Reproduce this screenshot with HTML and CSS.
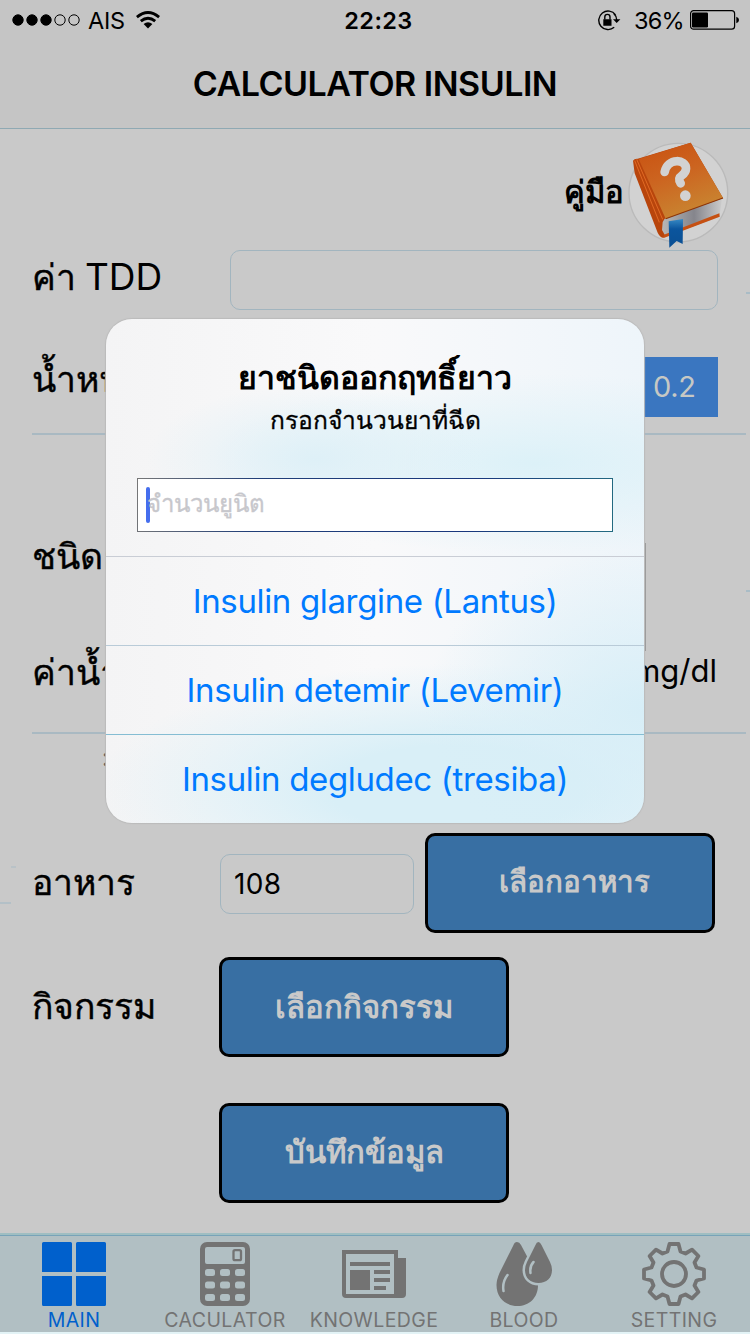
FILE: index.html
```html
<!DOCTYPE html>
<html lang="th">
<head>
<meta charset="utf-8">
<title>Calculator Insulin</title>
<link rel="stylesheet" href="styles.css">
</head>
<body>
<div class="screen">
  <header class="status">
    <div class="status-left">
      <svg class="dots" viewBox="0 0 68 12"><g stroke="#000"><circle cx="6" cy="6" r="5.2"/><circle cx="20" cy="6" r="5.2"/><circle cx="34" cy="6" r="5.2"/><g fill="none"><circle cx="48" cy="6" r="5.2"/><circle cx="62" cy="6" r="5.2"/></g></g></svg>
      <span class="carrier">AIS</span>
      <svg class="wifi" viewBox="0 0 24 18"><g fill="none" stroke="#000" stroke-width="2.8"><path d="M.9 6.1Q12-3.2 23.1 6.1"/><path d="M4.8 10.2Q12 4.2 19.2 10.2"/></g><path d="M7.6 13.1Q12 9.3 16.4 13.1L12 17.6Z"/></svg>
    </div>
    <div class="clock">22:23</div>
    <div class="status-right">
      <svg class="lock" viewBox="0 0 24 21"><path d="M18.6 4.8A9.3 9.3 0 1 0 17.2 17.3M16.6 3.2Q19.6 6 19.7 10" fill="none" stroke="#000" stroke-width="1.4"/><path d="M16 9.2h7.4L19.7 13zM6.3 9.2h8.2v6.5H6.3z"/><path d="M7.8 9.5V7a2.6 2.6 0 0 1 5.2 0v2.5" fill="none" stroke="#000" stroke-width="1.4"/></svg>
      <span class="percent">36%</span>
      <svg class="battery" viewBox="0 0 50 20"><rect x=".6" y=".6" width="44" height="18.6" rx="3" fill="none" stroke="#000" stroke-width="1.2"/><rect x="2" y="2.4" width="16" height="15" rx="1.2"/><path d="M46.3 6.7Q49 7.5 49 10t-2.7 3.3z"/></svg>
    </div>
  </header>
  <h1 class="title"><span>CALCULATOR INSULIN</span></h1>

  <main class="form">
    <div class="guide">
      <span class="guide-text">คู่มือ</span>
      <svg class="book" viewBox="264 36 302 320">
        <defs>
          <linearGradient id="cover" x1="0" y1="0" x2=".4" y2="1"><stop offset="0" stop-color="#c9500f"/><stop offset=".5" stop-color="#cc6420"/><stop offset="1" stop-color="#c98330"/></linearGradient>
          <linearGradient id="pages" x1="0" y1="0" x2="1" y2="0"><stop offset="0" stop-color="#bbb"/><stop offset=".55" stop-color="#85858c"/><stop offset="1" stop-color="#ccc"/></linearGradient>
          <linearGradient id="ribbon" x1="0" y1="0" x2="0" y2="1"><stop offset="0" stop-color="#3789c4"/><stop offset=".35" stop-color="#0b559d"/><stop offset="1" stop-color="#0b4f93"/></linearGradient>
        </defs>
        <circle cx="415" cy="188" r="148" fill="#d2d2d2" stroke="#bababa" stroke-width="4"/>
        <path d="M360 268L546 205L538 260L370 322Z" fill="url(#pages)"/>
        <path d="M362 318L538 250L539 260L371 324Z" fill="#c65012"/>
        <path d="M279 92Q283 85 293 86L452 38L549 204L374 266L368 276L366 300L374 314L368 323Q360 321 353 308L284 130Z" fill="#b8450c"/>
        <path d="M296 87L452 38L549 204L377 266Z" fill="url(#cover)"/>
        <path d="M284 92L358 277M290 88L368 268" fill="none" stroke="#e16a25" stroke-width="3"/>
        <path d="M377 266L549 204" stroke="#8d3509" stroke-width="3"/>
        <path d="M374 126C382 83 439 86 438 116C437 143 406 132 422 160" fill="none" stroke="#d2d2d2" stroke-width="26" stroke-linecap="round"/>
        <circle cx="436" cy="197" r="16" fill="#d2d2d2"/>
        <path d="M386 274L429 267L428 342L410 333L388 353Z" fill="url(#ribbon)"/>
      </svg>
    </div>

    <div class="row row-tdd"><label class="label l-tdd"><span>ค่า</span> <span class="latin">TDD</span></label><div class="field field-wide"></div></div>
    <div class="row row-weight"><label class="label l-weight">น้ำหนัก</label><div class="factor">0.2</div></div>
    <hr class="rule">
    <div class="row row-type"><label class="label l-type">ชนิดยา</label><div class="picker"></div></div>
    <div class="row row-sugar"><label class="label l-sugar">ค่าน้ำตาล</label><span class="unit">mg/dl</span></div>
    <hr class="rule">
    <div class="row row-note"><span class="note">: 0</span></div>
    <div class="row row-food"><label class="label l-food">อาหาร</label><div class="field field-food">108</div><div class="button b-food"><span>เลือกอาหาร</span></div></div>
    <div class="row row-act"><label class="label l-act">กิจกรรม</label><div class="button b-act"><span>เลือกกิจกรรม</span></div></div>
    <div class="row row-save"><div class="button b-save"><span>บันทึกข้อมูล</span></div></div>
  </main>

  <nav class="tabs">
    <div class="tab active"><svg viewBox="0 0 64 64"><path d="M1.5 0h27Q30 0 30 1.500V30H0V1.500Q0 0 1.500 0zM34 1.500Q34 0 35.500 0h27Q64 0 64 1.500V30H34zM0 34h30v28.500Q30 64 28.500 64H1.500Q0 64 0 62.500zM34 34h30v28.500Q64 64 62.500 64H35.500Q34 64 34 62.500z"/></svg><span class="t-main">MAIN</span></div>
    <div class="tab"><svg viewBox="0 0 64 64"><path fill-rule="evenodd" d="M14 0h36a7 7 0 0 1 7 7v50a7 7 0 0 1-7 7H14a7 7 0 0 1-7-7V7a7 7 0 0 1 7-7zM14 5a2 2 0 0 0-2 2v13a2 2 0 0 0 2 2h36a2 2 0 0 0 2-2V7a2 2 0 0 0-2-2z"/><rect x="40.500" y="8.200" width="7.500" height="10" rx="1.500" fill="none" stroke="#737373" stroke-width="2.300"/><g class="keys"><rect x="12" y="27" width="10" height="7" rx="2.500"/><rect x="27" y="27" width="10" height="7" rx="2.500"/><rect x="42" y="27" width="10" height="7" rx="2.500"/><rect x="12" y="39.500" width="10" height="7" rx="2.500"/><rect x="27" y="39.500" width="10" height="7" rx="2.500"/><rect x="42" y="39.500" width="10" height="7" rx="2.500"/><rect x="12" y="52" width="10" height="7" rx="2.500"/><rect x="27" y="52" width="10" height="7" rx="2.500"/><rect x="42" y="52" width="10" height="7" rx="2.500"/></g></svg><span class="t-calc">CACULATOR</span></div>
    <div class="tab"><svg viewBox="0 0 64 64"><path fill-rule="evenodd" d="M0 8h56v8h8v36q0 4-4 4H4q-4 0-4-4zM4 12v40h48V12z"/><path d="M8 20h40v4H8zM8 28h20v20H8zM32 28h16v4H32zM32 36h16v4H32zM32 44h12v4H32z"/></svg><span class="t-know">KNOWLEDGE</span></div>
    <div class="tab"><svg viewBox="0 0 64 64"><path d="M25 0Q27.500 0 29 3L46 35V43C46 56 37 64 25.500 64S4.500 56 4.500 43Q4.500 38 7.500 31L21.500 3Q22.500 0 25 0Z"/><path class="drop" d="M46.500 0Q48 0 49.500 3L58 20Q60 24 60 28C60 36 54.500 41 46.500 41S33 36 33 28Q33 24 35 20L43.500 3Q44.500 0 46.500 0Z"/><path class="shine" d="M11.500 49Q10 40 15.500 33M38.500 31Q37.500 24 41.500 20"/></svg><span class="t-blood">BLOOD</span></div>
    <div class="tab"><svg viewBox="-32 -32 64 64"><g fill="none" stroke="#737373" stroke-width="3.800" stroke-linejoin="round"><circle r="12"/><path d="M-6.500-22.500L-4.500-30H4.500L6.500-22.500L11.500-20.500L18-24.400L24.400-18L20.500-11.500L22.500-6.500L30-4.500V4.500L22.500 6.500L20.500 11.500L24.400 18L18 24.400L11.500 20.500L6.500 22.500L4.500 30H-4.500L-6.500 22.500L-11.500 20.500L-18 24.400L-24.400 18L-20.500 11.500L-22.500 6.500L-30 4.500V-4.500L-22.500-6.500L-20.500-11.500L-24.400-18L-18-24.400L-11.500-20.500Z"/></g></svg><span class="t-set">SETTING</span></div>
  </nav>

  <i class="tick tick-a"></i><i class="tick tick-b"></i><i class="tick tick-c"></i><i class="tick tick-d"></i>

  <section class="alert">
    <div class="alert-body">
      <h2><span>ยาชนิดออกฤทธิ์ยาว</span></h2>
      <p><span>กรอกจำนวนยาที่ฉีด</span></p>
      <div class="entry"><i class="caret"></i><span>จำนวนยูนิต</span></div>
    </div>
    <div class="choice c1"><span>Insulin glargine (Lantus)</span></div>
    <div class="choice c2"><span>Insulin detemir (Levemir)</span></div>
    <div class="choice c3"><span>Insulin degludec (tresiba)</span></div>
  </section>
</div>
</body>
</html>
```
FILE: styles.css
```css
* { box-sizing: border-box; }
body { margin: 0; font-family: Inter, "Noto Sans", sans-serif; color: #000; }
.screen { position: relative; width: 750px; height: 1334px; overflow: hidden; background: #c9c9c9; display: flex; flex-direction: column; }
svg { display: block; flex: none; }
span, label { white-space: nowrap; }

.status { height: 40px; display: grid; grid-template-columns: 1fr 100px 1fr; align-items: center; background: #c5c5c5; flex: none; }
.status-left { display: flex; align-items: center; padding-left: 12px; }
.dots { width: 68px; height: 12px; }
.carrier { font-size: 23.5px; margin-left: 8px; letter-spacing: -.3px; }
.wifi { width: 24px; height: 18px; margin-left: 11px; }
.clock { font-size: 23.5px; font-weight: 600; text-align: center; letter-spacing: .4px; padding-left: 7px; }
.status-right { display: flex; align-items: center; justify-content: flex-end; padding-right: 10px; }
.lock { width: 24px; height: 21px; margin-right: 13px; }
.percent { font-size: 23.500px; letter-spacing: -.700px; }
.battery { width: 50px; height: 20px; margin-left: 6px; }
.title { margin: 0; height: 89px; flex: none; display: flex; justify-content: center; font-size: 34px; line-height: 88px; font-weight: 600; letter-spacing: -.5px; background: #c5c5c5; border-bottom: 1px solid #8fa9b3; }

.form { flex: none; height: 1104px; display: flex; flex-direction: column; }
.guide { height: 121px; flex: none; display: flex; justify-content: flex-end; padding: 13px 21px 0 0; }
.guide-text { font-family: "Liberation Serif", serif; font-size: 31px; font-weight: 700; line-height: 102px; margin-right: 5px; letter-spacing: -.3px; }
.book { width: 100.700px; height: 106.700px; }
.row { display: flex; flex: none; align-items: center; padding-left: 32px; height: 60px; }
.label { font-family: "Liberation Serif", serif; font-size: 35.500px; line-height: 54px; height: 60px; flex: none; width: 188px; -webkit-text-stroke: .4px #000; }
.latin { font-family: Inter, sans-serif; font-size: 37px; -webkit-text-stroke: 0; }
.field { height: 60px; border: 1px solid #a2b5bf; border-radius: 10px; font-size: 28px; line-height: 58px; padding-left: 13px; letter-spacing: .3px; }
.field-wide { width: 488px; margin-left: 10px; }
.field-food { width: 194px; margin: 1px 11px 0 0; }
.row-weight { margin-top: 47px; padding-right: 32px; justify-content: space-between; }
.l-weight { line-height: 46px; }
.factor { width: 90px; height: 60px; background: #3a76c0; color: #c6c8c4; font-size: 29px; line-height: 60px; padding-left: 25px; letter-spacing: -.3px; }
.rule { flex: none; border: 0; width: 714px; height: 2px; background: #a9b9c2; margin: 16px 0 0 32px; }
.row-type { margin-top: 108px; height: 108px; align-items: flex-start; }
.l-type { line-height: 28px; }
.picker { width: 426px; height: 108px; border-right: 1px solid #999; }
.row-sugar { margin-top: -8px; height: 60px; padding-right: 33px; justify-content: space-between; }
.l-sugar { line-height: 60px; }
.unit { font-size: 31px; line-height: 56px; height: 60px; }
.row-sugar + .rule { margin-top: 29px; }
.row-note { height: 50px; padding-left: 102px; font-size: 24px; color: #555; }
.row-food { margin-top: 49px; height: 100px; }
.l-food, .l-act { line-height: 61px; }
.row-act { margin-top: 24px; height: 100px; }
.row-act .label { width: 187px; }
.row-save { margin-top: 46px; height: 100px; padding-left: 219px; }
.button { width: 290px; height: 100px; border: 3px solid #000; border-radius: 10px; background: #386fa3; color: #c9c9c9; font-family: "Liberation Serif", serif; font-size: 30px; font-weight: 700; display: flex; align-items: center; justify-content: center; padding-bottom: 4px; }
.b-food { padding-left: 8px; font-size: 29.500px; }
.b-act { font-size: 31px; padding-bottom: 0; }
.b-save { font-size: 31px; padding-bottom: 3px; }

.tabs { flex: none; height: 101px; display: grid; grid-template-columns: repeat(5, 150px); background: linear-gradient(#9fbec2 0 2px, #78a3b8 2px 3px, #b1bfc3 3px 99px, #e3f3f6 99px); color: #737373; }
.tab { display: flex; flex-direction: column; align-items: center; padding-top: 9px; font-size: 19.500px; line-height: 26px; letter-spacing: .4px; margin-left: -2px; }
.tab:nth-child(2) { margin-left: 0; }
.tab svg { width: 64px; height: 64px; fill: #737373; margin-bottom: 1px; }
.tab.active { color: #0060cc; }
.tab.active svg { fill: #0060cc; }
.keys { fill: #b1bfc3; }
.drop { stroke: #b1bfc3; stroke-width: 5px; paint-order: stroke; }
.shine { fill: none; stroke: #b1bfc3; stroke-width: 2.500px; stroke-linecap: round; }

.tick { position: absolute; height: 2px; background: #a9bcc6; }
.tick-a { left: 746px; top: 292px; width: 4px; }
.tick-b { left: 746px; top: 590px; width: 4px; }
.tick-c { left: 11px; top: 866px; width: 5px; opacity: .5; }
.tick-d { left: 0; top: 902px; width: 11px; opacity: .7; }

.alert { position: absolute; left: 106px; top: 319px; width: 538px; height: 504px; border-radius: 26px; overflow: hidden; box-shadow: 0 0 1px 1px #bbb;
  background:
    radial-gradient(ellipse 170px 75px at 210px 140px, #def0f7, #def0f700),
    radial-gradient(ellipse 330px 90px at 430px 145px, #dcf1f8, #dcf1f800),
    radial-gradient(ellipse 220px 160px at 538px 390px, #d7eef7, #d7eef700),
    radial-gradient(ellipse 360px 125px at 350px 470px, #d9eff7 35%, #d9eff700),
    linear-gradient(90deg, #f4f4f5, #f9f9fa 50%, #eef5fa); }
.alert-body { height: 238px; padding: 36px 31px 0; border-bottom: 1px solid #c9cdd5; }
.alert h2 { font-family: "Liberation Serif", serif; margin: 0; height: 48px; line-height: 46px; font-size: 32px; font-weight: 700; display: flex; justify-content: center; }
.alert p { font-family: "Liberation Serif", serif; margin: 0; height: 36px; line-height: 36px; font-size: 24.600px; -webkit-text-stroke: .3px #000; display: flex; justify-content: center; }
.entry { font-family: "Liberation Serif", serif; margin-top: 39px; height: 54px; border: 1px solid; border-image: linear-gradient(100deg, #777, #213f78 25%, #19377d 70%, #236b81) 1; background: #fff; display: flex; align-items: center; padding-left: 8px; font-size: 24px; color: #c7c7cc; -webkit-text-stroke: .3px #c7c7cc; }
.entry span { margin: -4px 0 0 -3px; }
.caret { width: 4px; height: 36px; border-radius: 2px; background: #456eee; flex: none; }
.choice { height: 89px; line-height: 89px; font-size: 33px; color: #007aff; display: flex; justify-content: center; letter-spacing: -.35px; }
.c1 { border-bottom: 1px solid #b9cbd8; }
.c2 { border-bottom: 1px solid #85bdd3; }
```
